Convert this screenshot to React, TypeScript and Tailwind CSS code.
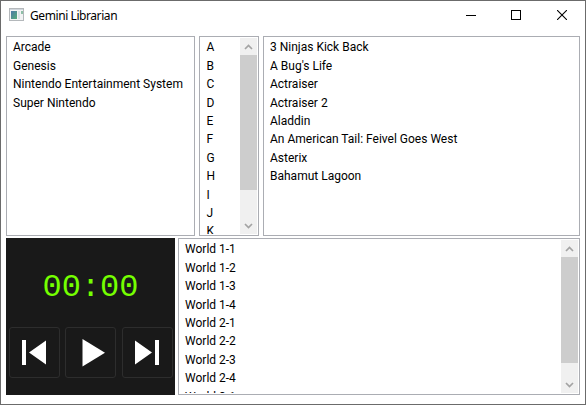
import React from 'react';

const systems = ['Arcade', 'Genesis', 'Nintendo Entertainment System', 'Super Nintendo'];
const letters = ['A', 'B', 'C', 'D', 'E', 'F', 'G', 'H', 'I', 'J', 'K'];
const games = [
  '3 Ninjas Kick Back',
  "A Bug's Life",
  'Actraiser',
  'Actraiser 2',
  'Aladdin',
  'An American Tail: Feivel Goes West',
  'Asterix',
  'Bahamut Lagoon',
];
const tracks = ['World 1-1', 'World 1-2', 'World 1-3', 'World 1-4', 'World 2-1', 'World 2-2', 'World 2-3', 'World 2-4', 'World 3-1'];

function Rows({ items }: { items: string[] }) {
  return (
    <ul className="min-w-0 flex-1 overflow-hidden pl-[5px] pt-[0.4px]">
      {items.map((item) => (
        <li key={item} className="h-[18.4px] whitespace-nowrap leading-[18.4px]">
          {item}
        </li>
      ))}
    </ul>
  );
}

function Chevron({ down = false }: { down?: boolean }) {
  return (
    <div className="flex h-[17px] shrink-0 items-center justify-center">
      <svg width="9" height="7" viewBox="0 0 9 7" fill="none" stroke="#a3a3a3" strokeWidth="1.7">
        <path d={down ? 'M1 2 4.5 5.5 8 2' : 'M1 6 4.5 2.5 8 6'} />
      </svg>
    </div>
  );
}

function Scrollbar({ thumb }: { thumb: string }) {
  return (
    <div className="flex w-[17px] shrink-0 flex-col bg-[#f0f0f0]">
      <Chevron />
      <div className={`bg-[#cdcdcd] ${thumb}`} />
      <div className="flex-1" />
      <Chevron down />
    </div>
  );
}

function PlayerButton({ label, children }: { label: string; children: React.ReactNode }) {
  return (
    <button aria-label={label} className="h-[51px] w-[51px] rounded-[3px] border border-[#2d2d2d]">
      <svg width="49" height="49" viewBox="0 0 49 49" fill="#fff">
        {children}
      </svg>
    </button>
  );
}

const panel = 'flex border border-[#abadb3] bg-white p-px';

export default function App() {
  return (
    <div className="flex h-[405px] w-[586px] flex-col border border-[#6b6b6b] bg-white font-['Roboto','Liberation_Sans',sans-serif] text-[12px] text-black">
      <header className="flex h-[35px] shrink-0 items-start pl-2">
        <svg className="mt-[7px]" width="15" height="13" viewBox="0 0 15 13">
          <defs>
            <linearGradient id="pane" x1="0" y1="0" x2="1" y2="1">
              <stop offset="0" stopColor="#4b78a8" />
              <stop offset="1" stopColor="#55ad79" />
            </linearGradient>
          </defs>
          <rect x=".5" y=".5" width="14" height="12" fill="#f2f3f4" stroke="#b4b8bb" />
          <path d="M1 1.5h13" stroke="#d0d6dc" />
          <rect x="2" y="3" width="6" height="8" fill="url(#pane)" />
          <rect x="9" y="3" width="2" height="8" fill="#d9e2e6" />
          <rect x="12" y="3" width="2" height="3" fill="#8ebfa7" />
        </svg>
        <h1 className="ml-[6px] mt-[6px] font-['Noto_Sans',sans-serif] text-[12px] leading-[17px] tracking-[-0.42px]">Gemini Librarian</h1>
        <div className="ml-auto mr-[18px] mt-[9px] flex">
          <svg className="mr-[35px]" width="10" height="11" viewBox="0 0 10 11" shapeRendering="crispEdges">
            <path d="M0 5.5h10" stroke="#000" />
          </svg>
          <svg className="mr-[36px]" width="10" height="10" viewBox="0 0 10 10" fill="none" shapeRendering="crispEdges">
            <path d="M.5.5h9v9h-9z" stroke="#000" />
          </svg>
          <svg width="10" height="10" viewBox="0 0 10 10">
            <path d="M0 0l10 10M10 0L0 10" stroke="#000" strokeWidth="1.1" />
          </svg>
        </div>
      </header>
      <div className="flex h-[200px] shrink-0 pl-[5px]">
        <section className={`${panel} w-[189px]`}>
          <Rows items={systems} />
        </section>
        <section className={`${panel} ml-1 w-[60px]`}>
          <div className="w-[0.5px]" />
          <Rows items={letters} />
          <Scrollbar thumb="h-[135px]" />
        </section>
        <section className={`${panel} ml-1 w-[317px]`}>
          <Rows items={games} />
        </section>
      </div>
      <div className="mt-[2px] flex h-[157px] shrink-0 pl-[5px]">
        <section className="flex w-[169px] flex-col items-center bg-[#191919]">
          <div className="mt-[32px] h-[36px] font-['Liberation_Mono',monospace] text-[32px] leading-[36px] text-[#75ff00]">00:00</div>
          <div className="mt-[21px] flex w-full pl-[3px]">
            <PlayerButton label="Previous">
              <path d="M12 12h4v25h-4zM36 12.500v24L19 24.500z" />
            </PlayerButton>
            <div className="w-[5px]" />
            <PlayerButton label="Play">
              <path d="M16.500 11v27.500L39 24.700z" />
            </PlayerButton>
            <div className="w-[6px]" />
            <PlayerButton label="Next">
              <path d="M12 12.500v24L29 24.500zM32 12h4v25h-4z" />
            </PlayerButton>
          </div>
        </section>
        <section className={`${panel} ml-[3px] w-[402px]`}>
          <Rows items={tracks} />
          <Scrollbar thumb="h-[106px]" />
        </section>
      </div>
    </div>
  );
}
